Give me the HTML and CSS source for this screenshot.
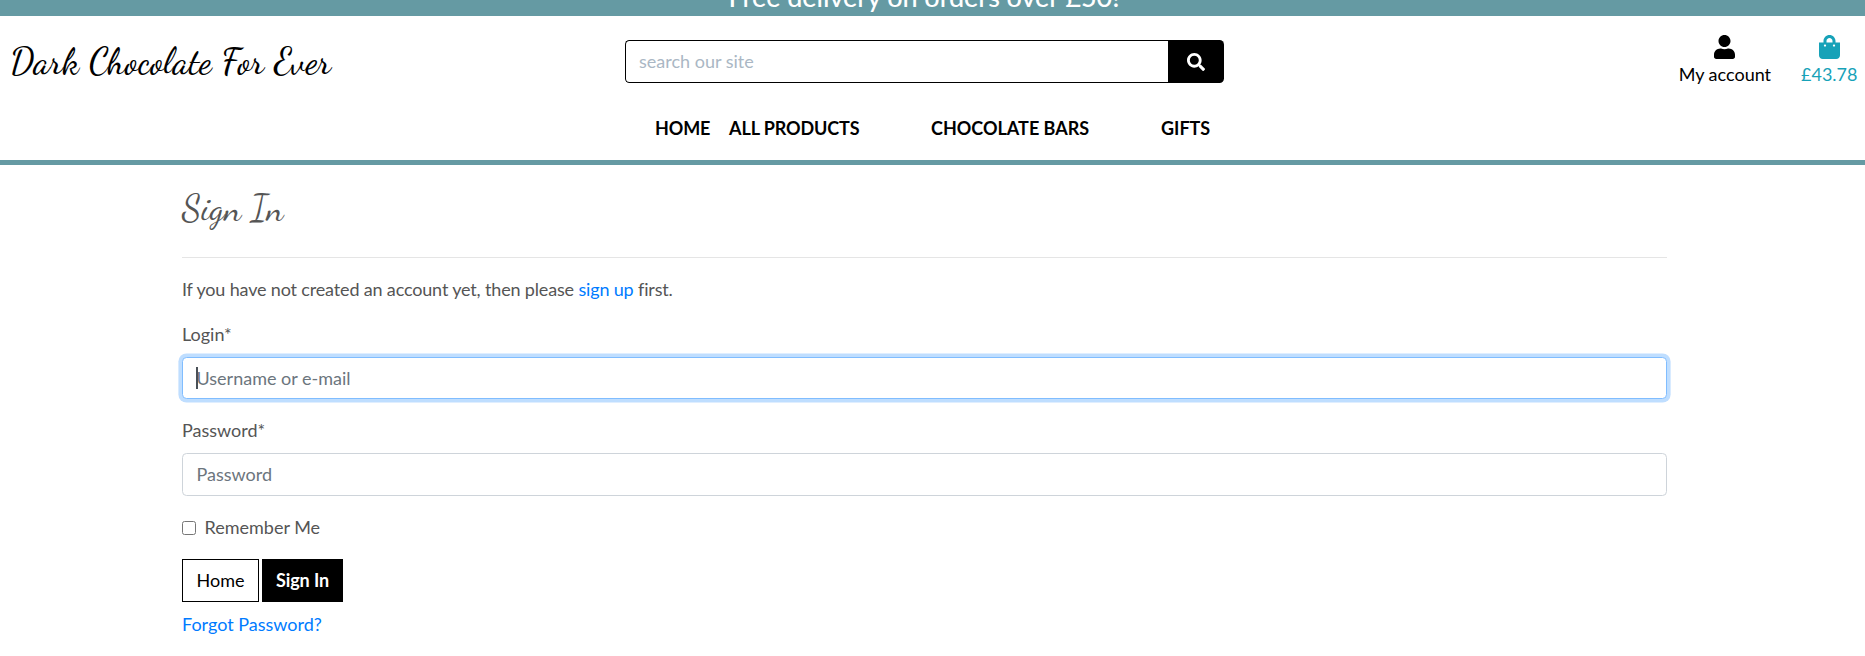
FILE: index.html
```html
<!DOCTYPE html>
<html lang="en">
<head>
<meta charset="utf-8">
<title>Dark Chocolate For Ever</title>
<link rel="stylesheet" href="styles.css">
</head>
<body>
<div class="banner"><h4 class="banner-text">Free delivery on orders over £50!</h4></div>
<header class="header">
  <div class="topline">
    <a class="logo" href="#"><span class="script logo-text">Dark Chocolate For Ever</span></a>
    <form class="search">
      <input class="search-input" type="text" placeholder="search our site">
      <button class="search-button" type="button" aria-label="Search">
        <svg width="18" height="18" viewBox="0 0 512 512" fill="currentColor"><path d="M505 442.700 405.300 343c-4.500-4.500-10.600-7-17-7H372c27.600-35.300 44-79.700 44-128C416 93.100 322.900 0 208 0S0 93.100 0 208s93.100 208 208 208c48.300 0 92.700-16.400 128-44v16.300c0 6.400 2.500 12.500 7 17l99.700 99.700c9.400 9.400 24.600 9.400 33.900 0l28.300-28.300c9.400-9.400 9.400-24.600.1-34zM208 336c-70.700 0-128-57.200-128-128 0-70.700 57.200-128 128-128 70.700 0 128 57.200 128 128 0 70.700-57.200 128-128 128z"/></svg>
      </button>
    </form>
    <div class="tools">
      <a class="tool account" href="#">
        <svg width="21" height="24" viewBox="0 0 448 512" fill="currentColor"><path d="M224 256c70.700 0 128-57.300 128-128S294.700 0 224 0 96 57.300 96 128s57.300 128 128 128zm89.600 32h-16.700c-22.200 10.200-46.900 16-72.900 16s-50.600-5.800-72.900-16h-16.700C60.200 288 0 348.200 0 422.400V464c0 26.500 21.500 48 48 48h352c26.500 0 48-21.500 48-48v-41.600c0-74.200-60.200-134.400-134.400-134.400z"/></svg>
        <span>My account</span>
      </a>
      <a class="tool bag" href="#">
        <svg width="21" height="24" viewBox="0 0 448 512" fill="currentColor"><path d="M352 160v-32C352 57.420 294.579 0 224 0 153.420 0 96 57.420 96 128v32H0v272c0 44.183 35.817 80 80 80h288c44.183 0 80-35.817 80-80V160h-96zm-192-32c0-35.290 28.710-64 64-64s64 28.710 64 64v32H160v-32zm160 120c-13.255 0-24-10.745-24-24s10.745-24 24-24 24 10.745 24 24-10.745 24-24 24zm-192 0c-13.255 0-24-10.745-24-24s10.745-24 24-24 24 10.745 24 24-10.745 24-24 24z"/></svg>
        <span>£43.78</span>
      </a>
    </div>
  </div>
  <nav class="nav">
    <a class="nav-home" href="#">HOME</a>
    <a class="nav-products" href="#">ALL PRODUCTS</a>
    <a class="nav-bars" href="#">CHOCOLATE BARS</a>
    <a class="nav-gifts" href="#">GIFTS</a>
  </nav>
</header>
<main class="content">
  <h1 class="title"><span class="script title-text">Sign In</span></h1>
  <hr class="rule">
  <p class="intro">If you have not created an account yet, then please <a class="link" href="#">sign up</a> first.</p>
  <form>
    <div class="field">
      <label class="label" for="login">Login*</label>
      <div class="control caret"><input class="input focused" id="login" type="text" placeholder="Username or e-mail"></div>
    </div>
    <div class="field">
      <label class="label" for="password">Password*</label>
      <div class="control"><input class="input input-password" id="password" type="password" placeholder="Password"></div>
    </div>
    <label class="remember"><input class="checkbox" type="checkbox"><span>Remember Me</span></label>
    <div class="actions">
      <a class="btn btn-home" href="#">Home</a>
      <button class="btn btn-dark" type="button">Sign In</button>
    </div>
    <a class="link forgot" href="#">Forgot Password?</a>
  </form>
</main>
</body>
</html>
```
FILE: styles.css
```css
* { box-sizing: border-box; }
body { margin: 0; background: #fff; color: #555; font: 400 18px/27px Lato, sans-serif; overflow: hidden; }
a { color: inherit; text-decoration: none; }
svg { display: block; }
input, button { font: inherit; margin: 0; }

.banner { height: 16px; background: #659aa3; color: #fff; display: flex; justify-content: center; align-items: flex-end; padding-right: 17px; }
.banner-text { margin: 0 0 3px; font-size: 27px; line-height: 32px; font-weight: 500; letter-spacing: -0.05px; white-space: nowrap; }

.header { height: 149px; border-bottom: 5px solid #659aa3; color: #000; }
.topline { height: 89px; display: grid; grid-template-columns: 625px 599px 1fr; }
.script { font-family: "Dancing Script", cursive; white-space: nowrap; }
.logo { padding: 22px 0 0 10px; }
.logo-text { display: block; font-size: 36px; line-height: 48px; font-weight: 500; letter-spacing: 0.27px; }
.search { display: flex; height: 43px; margin-top: 24px; }
.search-input { flex: 1; min-width: 0; border: 1px solid #000; border-right: 0; border-radius: 4.5px 0 0 4.5px; padding: 0 13px; background: #fff; outline: 0; }
.search-input::placeholder { color: #aab7c4; opacity: 1; }
.search-button { width: 56px; border: 0; border-radius: 0 4.5px 4.5px 0; background: #000; color: #fff; padding: 0; display: grid; place-items: center; }
.tools { display: flex; justify-content: flex-end; gap: 30px; padding: 19px 7.5px 0 0; }
.tool { display: flex; flex-direction: column; align-items: center; gap: 2px; white-space: nowrap; }
.bag { color: #17a2b8; }

.nav { display: flex; padding: 10px 0 0 655px; font-weight: 700; letter-spacing: -0.1px; white-space: nowrap; }
.nav-home { width: 74px; }
.nav-products { width: 202px; }
.nav-bars { width: 230px; letter-spacing: 0; }
.nav-gifts { letter-spacing: 0; }

.content { width: 1485px; margin-left: 182px; }
.title { margin: 0; padding-top: 20px; font-weight: 400; }
.title-text { display: block; font-size: 36px; line-height: 48px; font-weight: 400; letter-spacing: 0.15px; }
.rule { margin: 24px 0 18px; border: 0; border-top: 1px solid rgba(0, 0, 0, .1); }
.intro { margin: 0 0 18px; letter-spacing: -0.16px; }
.link { color: #007bff; }
.field { margin-bottom: 18px; }
.label { display: block; margin-bottom: 8.500px; }
.control { position: relative; }
.input { display: block; width: 100%; height: 42.500px; padding: 0 13.500px; border: 1px solid #ced4da; border-radius: 4.5px; background: #fff; outline: 0; }
.input-password { height: 43.500px; }
.input::placeholder { color: #6c757d; opacity: 1; }
.focused { border-color: #80bdff; box-shadow: 0 0 0 3.6px rgba(0, 123, 255, .25); }
.caret::after { content: ""; position: absolute; left: 14px; top: 10px; width: 2px; height: 22px; background: #495057; }
.remember { display: flex; align-items: center; gap: 8.500px; margin-bottom: 18px; }
.checkbox { width: 14px; height: 14px; }
.actions { display: flex; gap: 3px; height: 43px; }
.btn { display: flex; align-items: center; justify-content: center; height: 43px; padding: 0; border: 1px solid #000; border-radius: 0; background: #fff; color: #000; white-space: nowrap; }
.btn-home { width: 77px; }
.btn-dark { width: 81px; background: #000; color: #fff; font-weight: 700; letter-spacing: -0.1px; }
.forgot { display: block; margin-top: 9px; }
```
